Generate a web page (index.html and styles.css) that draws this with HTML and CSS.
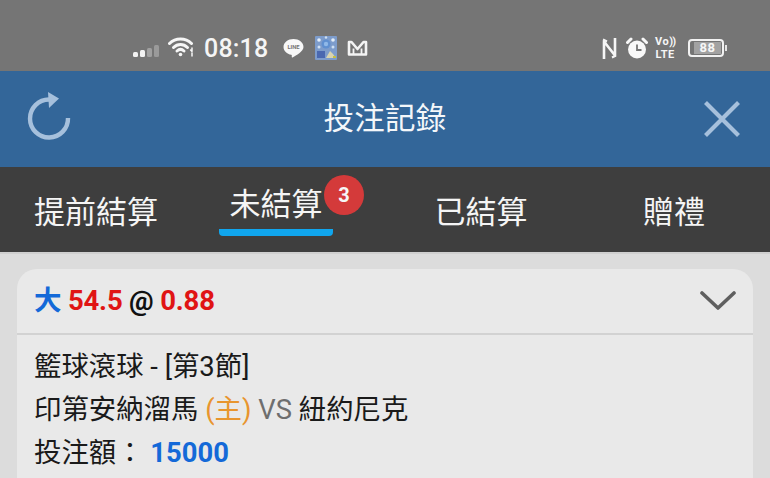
FILE: index.html
```html
<!DOCTYPE html>
<html lang="zh-Hant">
<head>
  <meta charset="UTF-8" />
  <meta name="viewport" content="width=device-width,initial-scale=1.0" />
  <title>投注記錄</title>
  <link rel="stylesheet" href="styles.css">
</head>
<body>
  <div class="status-bar">
    <div class="status-left">
      <svg class="signal" width="26" height="12" viewBox="0 0 26 12">
        <rect x="0" y="7" width="5" height="5" rx="1.5" fill="#f2f2f2"/>
        <rect x="7" y="5" width="5" height="7" rx="1.5" fill="#f2f2f2"/>
        <rect x="14" y="3" width="5" height="9" rx="1.5" fill="#a0a0a0"/>
        <rect x="21" y="0" width="5" height="12" rx="1.5" fill="#9a9a9a"/>
      </svg>
      <svg class="wifi" width="27" height="20" viewBox="0 0 27 20" fill="none" stroke="#f6f6f6" stroke-linecap="round">
        <path d="M1.500 6.500C7.500 0.500 17.500 0.500 23.500 6.500" stroke-width="3"/>
        <path d="M5.500 10.500C9.500 6.500 15.500 6.500 19.500 10.500" stroke-width="3"/>
        <path d="M9 14C11.200 12 13.800 12 16 14" stroke-width="3"/>
        <circle cx="12.500" cy="17.500" r="1.800" fill="#f6f6f6" stroke="none"/>
        <path d="M24 11v3M22.600 13l1.400 1.400M24 19v-3" stroke-width="1.500"/>
      </svg>
      <span class="clock">08:18</span>
      <svg class="line-icon" width="21" height="21" viewBox="0 0 20 20">
        <path d="M10 1C4.800 1 .5 4.300 .5 8.600c0 3.700 3.200 6.700 7.400 7.400.5.100.6.700.4 1.800-.1.800.5.900 1.200.500 2.800-1.500 10-5.300 10-9.700C19.500 4.300 15.200 1 10 1z" fill="#f8f8f8"/>
        <text x="10" y="10.800" class="line-text">LINE</text>
      </svg>
      <svg class="qr-icon" width="22" height="24" viewBox="0 0 22 24">
        <rect width="22" height="24" rx="1" fill="#7d9ccb"/>
        <circle cx="11" cy="8" r="4.500" fill="#5f8fd0"/>
        <circle cx="11" cy="8" r="2.200" fill="#8fb8e8"/>
        <circle cx="4" cy="4" r="1.800" fill="#e4eef8"/>
        <circle cx="18" cy="4" r="1.800" fill="#e4eef8"/>
        <circle cx="4" cy="11" r="1.500" fill="#cfe0f2"/>
        <circle cx="18" cy="11" r="1.500" fill="#cfe0f2"/>
        <circle cx="11" cy="1.500" r="1.200" fill="#cfe0f2"/>
        <rect x="2" y="15" width="8" height="7" fill="#4a68b0"/>
        <path d="M11 22l4-7 3 3 3 4z" fill="#d8d4b0"/>
        <rect x="18" y="20" width="3" height="2" fill="#c8c040"/>
      </svg>
      <svg class="m-icon" width="21" height="16" viewBox="0 0 21 16" fill="none" stroke="#f4f4f4" stroke-width="2.600" stroke-linejoin="round">
        <path d="M2 14.500V2h2.500l6 7 6-7H19v12.500z"/>
        <path d="M6.500 15V8.500M14.500 15V8.500" stroke-width="1.800"/>
      </svg>
    </div>
    <div class="status-right">
      <svg class="nfc-icon" width="15" height="23" viewBox="0 0 15 23" fill="none" stroke="#f6f6f6" stroke-width="2.600">
        <path d="M2 22V4.500L13 18.500V1" stroke-linejoin="round"/>
        <path d="M1 2.500L5 4.500M10 20.500L14 18.500" stroke-width="2"/>
      </svg>
      <svg class="alarm-icon" width="22" height="22" viewBox="0 0 22 22">
        <circle cx="11" cy="12.500" r="9" fill="#f8f8f8"/>
        <path d="M1.500 5.500L5 2M20.500 5.500L17 2" stroke="#f8f8f8" stroke-width="3" stroke-linecap="round"/>
        <path d="M11 7.500V13h4.500" fill="none" stroke="#757575" stroke-width="1.800"/>
      </svg>
      <div class="volte"><span>Vo<i class="volte-bars">))</i></span><span>LTE</span></div>
      <div class="battery">
        <div class="battery-body"><span class="battery-level">88</span></div>
        <div class="battery-tip"></div>
      </div>
    </div>
  </div>

  <header class="title-bar">
    <svg class="refresh" width="46" height="50" viewBox="0 0 46 50" fill="none">
      <path d="M24 7.500A19 19 0 1 0 43 26" stroke="#a6c0dc" stroke-width="4.400"/>
      <path d="M23 0L34 6.500 24 16z" fill="#a6c0dc"/>
    </svg>
    <h1 class="page-title">投注記錄</h1>
    <svg class="close" width="36" height="36" viewBox="0 0 36 36" stroke="#a6c0dc" stroke-width="4.200">
      <path d="M1.500 1.500L34.500 34.500M34.500 1.500L1.500 34.500"/>
    </svg>
  </header>

  <nav class="tabs">
    <div class="tab">提前結算</div>
    <div class="tab tab-active">
      <span class="tab-label">未結算</span>
      <span class="badge">3</span>
    </div>
    <div class="tab">已結算</div>
    <div class="tab">贈禮</div>
  </nav>

  <main class="content">
    <section class="card">
      <div class="card-head">
        <div class="bet-line">
          <span class="blue">大</span>
          <span class="red">54.5</span>
          <span class="black">@</span>
          <span class="red">0.88</span>
        </div>
        <svg class="chevron" width="36" height="22" viewBox="0 0 36 22" fill="none" stroke="#5f5f5f" stroke-width="3.600" stroke-linecap="round" stroke-linejoin="round">
          <path d="M2 3L18 18 34 3"/>
        </svg>
      </div>
      <div class="card-body">
        <div class="row">籃球滾球 - [第3節]</div>
        <div class="row">印第安納溜馬 <span class="orange">(主)</span> <span class="grey">VS</span> 紐約尼克</div>
        <div class="row">投注額： <span class="amount">15000</span></div>
      </div>
    </section>
  </main>
</body>
</html>
```

FILE: styles.css
```css
html,body{margin:0;width:770px;height:478px;overflow:hidden;background:#dcdcdc}
body {
  display: flex;
  flex-direction: column;
  font-family: Roboto, "Noto Sans CJK TC", sans-serif;
}

/* Status bar */
.status-bar {
  flex: none;
  height: 71px;
  box-sizing: border-box;
  padding: 25px 43px 0 133px;
  background: #757575;
  display: flex;
  justify-content: space-between;
  align-items: center;
}
.status-left,
.status-right {
  display: flex;
  align-items: center;
}
.signal { margin-top: 6px; }
.wifi { margin-left: 9px; margin-top: -2px; }
.clock {
  margin-left: 9px;
  color: #f5f5f5;
  font-size: 25px;
  font-weight: 500;
  letter-spacing: 0.2px;
}
.line-icon { margin-left: 15px; }
.line-text {
  font-size: 5.500px;
  font-weight: 700;
  fill: #757575;
  text-anchor: middle;
}
.qr-icon { margin-left: 11px; }
.m-icon { margin-left: 10px; }
.status-right { gap: 9px; }
.alarm-icon { margin-right: -2px; }
.volte {
  display: flex;
  flex-direction: column;
  align-items: center;
  color: #f6f6f6;
  font-size: 11px;
  font-weight: 700;
  line-height: 13px;
  letter-spacing: 0.5px;
}
.volte-bars { font-style: normal; letter-spacing: -1px; }
.battery {
  display: flex;
  align-items: center;
  margin-left: 4px;
}
.battery-body {
  width: 36px;
  height: 18px;
  box-sizing: border-box;
  border: 2px solid #f2f2f2;
  border-radius: 4px;
  padding: 1px;
  display: flex;
}
.battery-level {
  width: 27px;
  margin-left: 3px;
  background: #a2a2a2;
  color: #f6f6f6;
  font-size: 13px;
  font-weight: 700;
  line-height: 12px;
  text-align: center;
  letter-spacing: 0.6px;
}
.battery-tip {
  width: 2px;
  height: 6px;
  margin-left: 1px;
  background: #e4e4e4;
}

/* Title bar */
.title-bar {
  flex: none;
  height: 96px;
  box-sizing: border-box;
  padding: 0 30px 0 25px;
  background: #336699;
  display: flex;
  align-items: center;
  justify-content: space-between;
  position: relative;
}
.page-title {
  position: absolute;
  left: 0;
  right: 0;
  margin: 0;
  text-align: center;
  color: #f4f7fa;
  font-size: 30.500px;
  font-weight: 400;
  letter-spacing: 0.3px;
  line-height: 92px;
}
.refresh { margin-top: -4px; }

/* Tabs */
.tabs {
  flex: none;
  height: 85px;
  background: #3e3e3e;
  display: grid;
  grid-template-columns: 192px 168px 242px 144px;
  border-bottom: 2px solid #cfcfcf;
}
.tab {
  color: #f5f5f5;
  font-size: 31px;
  line-height: 91px;
  text-align: center;
  position: relative;
}
.tab-active .tab-label {
  display: block;
  width: 114px;
  margin: 0 auto;
  line-height: 40px;
  padding-top: 18px;
  height: 44px;
  border-bottom: 7px solid #10a6ee;
  border-radius: 0 0 4px 4px;
}
.badge {
  position: absolute;
  left: 132px;
  top: 8px;
  width: 40px;
  height: 40px;
  border-radius: 50%;
  background: #d43a3a;
  color: #f6f6f6;
  font-size: 20px;
  font-weight: 700;
  line-height: 40px;
}

/* Card */
.content {
  flex: 1;
  display: flex;
  padding: 15px 17px 0;
}
.card {
  flex: 1;
  background: #e9e9e9;
  border-radius: 20px 20px 0 0;
}
.card-head {
  height: 66px;
  box-sizing: border-box;
  padding: 0 17px 0 17px;
  border-bottom: 2px solid #d2d2d2;
  display: flex;
  align-items: center;
  justify-content: space-between;
}
.bet-line {
  font-size: 27.500px;
  font-weight: 700;
  letter-spacing: -0.2px;
  margin-top: -7px;
}
.blue { color: #1469d8; }
.red { color: #e01414; }
.black { color: #111; }
.chevron { margin-top: -1px; }
.card-body {
  padding: 11px 17px 0;
  color: #1a1a1a;
  font-size: 27.400px;
  line-height: 43px;
}
.row { white-space: nowrap; }
.orange { color: #e8952e; }
.grey { color: #6e6e6e; }
.amount {
  color: #1469d8;
  font-weight: 700;
}
```
